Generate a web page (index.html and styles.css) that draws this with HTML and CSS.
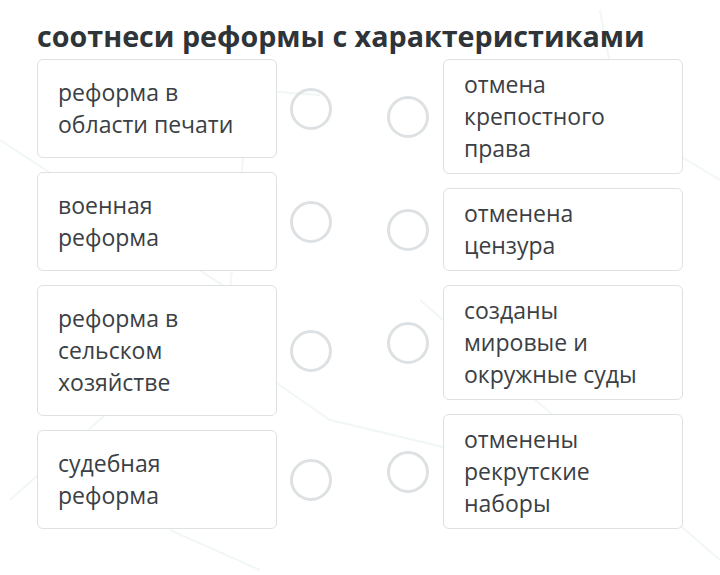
FILE: index.html
```html
<!DOCTYPE html>
<html lang="ru">
<head>
  <meta charset="UTF-8">
  <meta name="viewport" content="width=device-width, initial-scale=1.0">
  <title>Соотнеси реформы</title>
  <link rel="stylesheet" href="styles.css">
</head>
<body>

  <div class="task">
    <h1 class="task-title">соотнеси реформы с характеристиками</h1>

    <div class="board">
      <!-- Left column: reforms -->
      <div class="column">
        <div class="pair">
          <div class="card card-left">реформа в<br>области печати</div>
          <span class="dot"></span>
        </div>
        <div class="pair">
          <div class="card card-left">военная<br>реформа</div>
          <span class="dot"></span>
        </div>
        <div class="pair">
          <div class="card card-left">реформа в<br>сельском<br>хозяйстве</div>
          <span class="dot"></span>
        </div>
        <div class="pair">
          <div class="card card-left">судебная<br>реформа</div>
          <span class="dot"></span>
        </div>
      </div>

      <!-- Right column: characteristics -->
      <div class="column">
        <div class="pair">
          <span class="dot"></span>
          <div class="card card-right">отмена<br>крепостного<br>права</div>
        </div>
        <div class="pair">
          <span class="dot"></span>
          <div class="card card-right">отменена<br>цензура</div>
        </div>
        <div class="pair">
          <span class="dot"></span>
          <div class="card card-right">созданы<br>мировые и<br>окружные суды</div>
        </div>
        <div class="pair">
          <span class="dot"></span>
          <div class="card card-right">отменены<br>рекрутские<br>наборы</div>
        </div>
      </div>
    </div>
  </div>

</body>
</html>
```

FILE: styles.css
```css
/* Common styles */
body {
  margin: 0;
  font-family: "Open Sans", "Noto Sans", sans-serif;
  color: #3b4044;
  background-color: #fff;
  background-image: url("data:image/svg+xml,%3Csvg xmlns='http://www.w3.org/2000/svg' width='720' height='575'%3E%3Cg fill='none' stroke='%23f0f7f4' stroke-width='2'%3E%3Cpath d='M0 140 L230 290 L250 90 L320 95'/%3E%3Cpath d='M10 500 L200 330 L330 420 L540 470'/%3E%3Cpath d='M600 10 L620 120 L720 180'/%3E%3Cpath d='M420 300 L720 560'/%3E%3Cpath d='M170 530 L260 570'/%3E%3Cpath d='M450 270 L470 250'/%3E%3C/g%3E%3C/svg%3E");
  background-repeat: no-repeat;
}

.task {
  padding: 18px 0 0 37px;
}

.task-title {
  margin: 0 0 5px;
  font-size: 28.7px;
  font-weight: 700;
  line-height: 36px;
  color: #2e3438;
}

/* Board */
.board {
  display: flex;
  gap: 55px;
}

.column {
  display: flex;
  flex-direction: column;
  gap: 14px;
}

.pair {
  display: flex;
  align-items: center;
  gap: 13px;
}

.column + .column .pair {
  gap: 14px;
}

/* Cards */
.card {
  width: 240px;
  box-sizing: border-box;
  background-color: #fff;
  border: 1px solid #dde1e3;
  border-radius: 6px;
  font-size: 23px;
  line-height: 32px;
}

.card-left {
  padding: 16px 20px 17px;
}

.card-right {
  padding: 8px 20px 9px;
}

/* Connector dots */
.dot {
  flex: none;
  width: 42px;
  height: 42px;
  box-sizing: border-box;
  border: 3px solid #dde1e3;
  border-radius: 50%;
}
```
